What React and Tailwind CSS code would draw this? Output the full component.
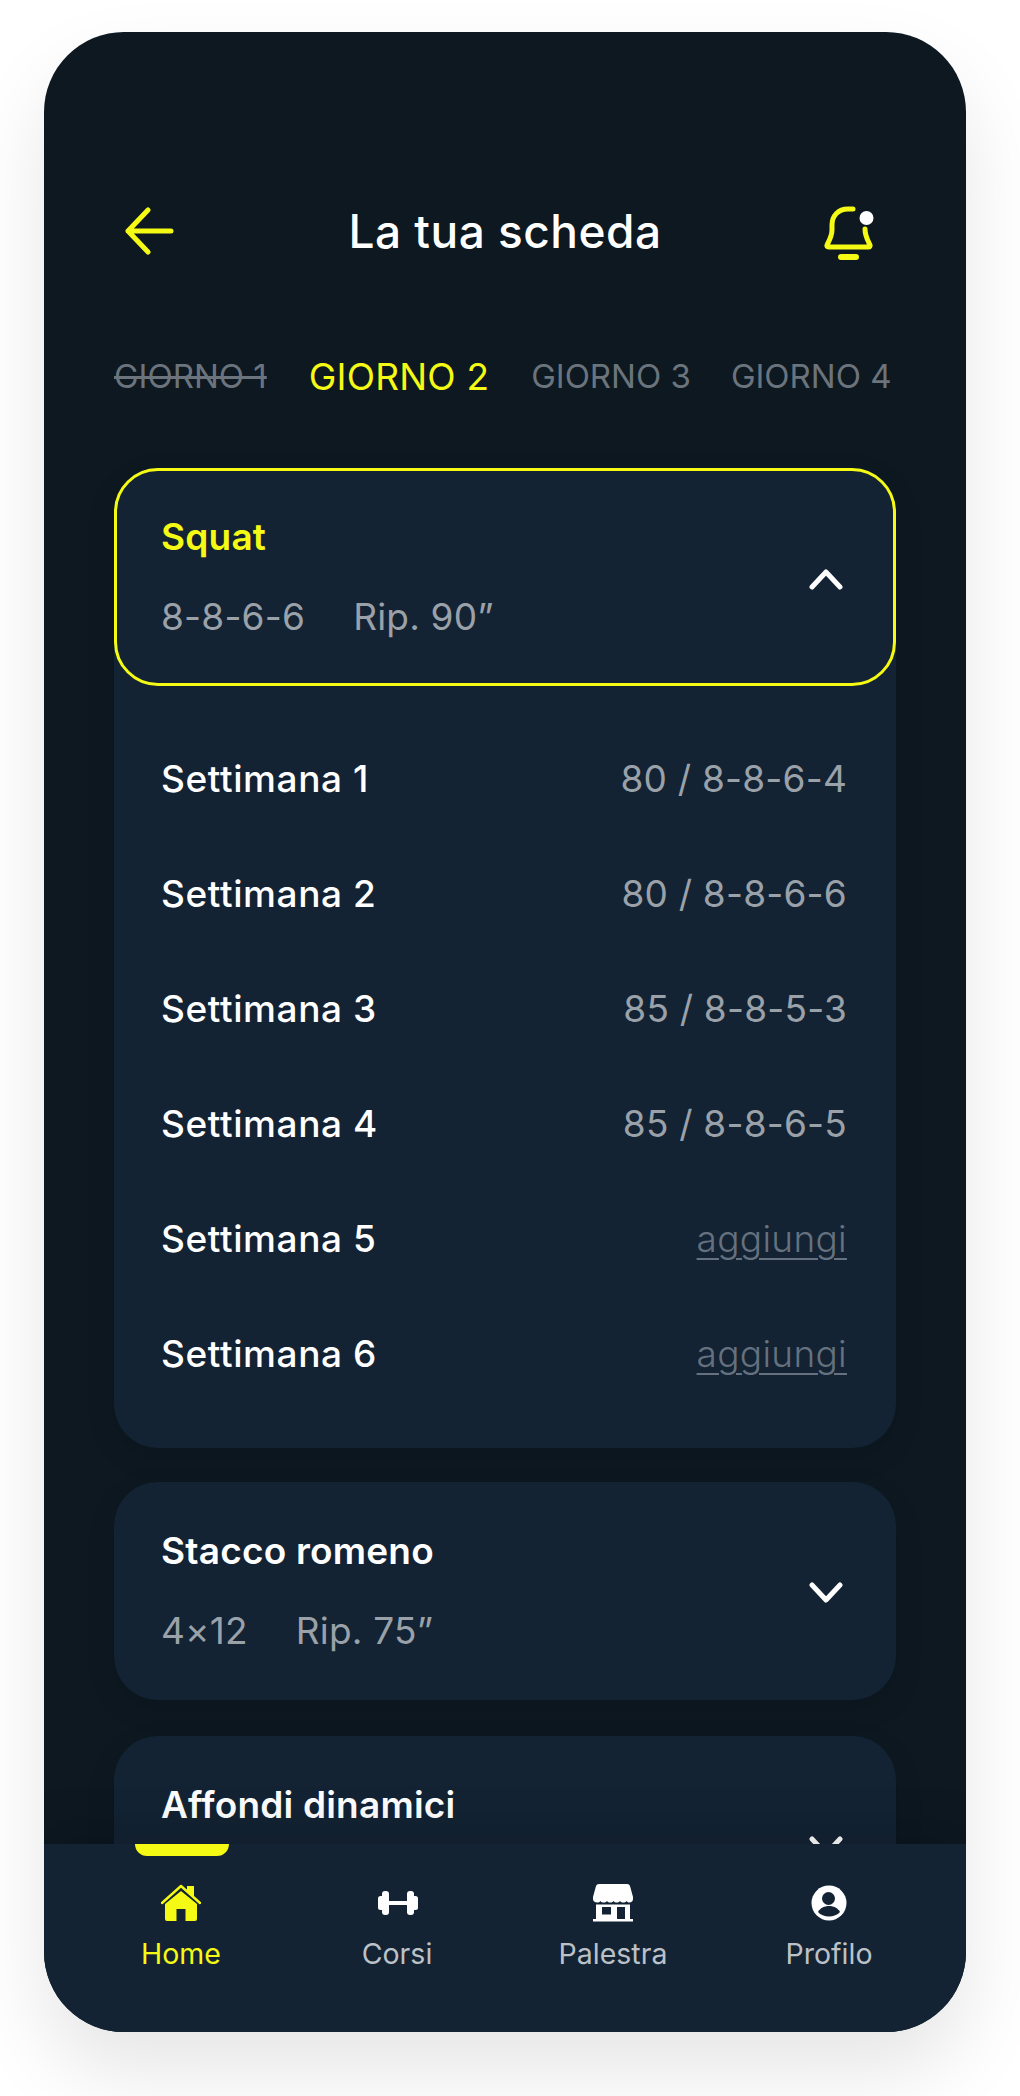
import React from 'react';

const YELLOW = '#f5fa14';

const ArrowLeft = () => (
  <svg width="50" height="48" viewBox="0 0 50 48" fill="none" stroke={YELLOW} strokeWidth="5" strokeLinecap="round" strokeLinejoin="round">
    <path d="M24 3 4 24l20 21M4 24h43" />
  </svg>
);

const Bell = () => (
  <svg width="56" height="60" viewBox="0 0 56 60" fill="none">
    <path d="M31 4h-5C16 4 10 11 10 20v5c0 6-3 11-5 15-.6 1.200.2 2 1.500 2h40c1.300 0 2-.8 1.500-2-2-4-5-9-5-16" stroke={YELLOW} strokeWidth="5" strokeLinecap="round" strokeLinejoin="round" />
    <rect x="16" y="49" width="21" height="6" rx="3" fill={YELLOW} />
    <circle cx="44.500" cy="13" r="7" fill="#fff" />
  </svg>
);

const Chevron = ({ up }) => (
  <svg className="mt-[3px]" width="36" height="22" viewBox="0 0 36 22" fill="none" stroke="#fff" strokeWidth="5" strokeLinecap="round" strokeLinejoin="round">
    <path d={up ? 'M4 19 18 4l14 15' : 'M4 3l14 15L32 3'} />
  </svg>
);

const HomeIcon = () => (
  <svg width="40" height="38" viewBox="0 0 40 38" fill={YELLOW}>
    <path d="M26 2h7v11l-7-6z" />
    <path d="M1 19 20 2l19 17" fill="none" stroke={YELLOW} strokeWidth="2.400" strokeLinecap="round" strokeLinejoin="round" />
    <path d="M20 7 36 20v15a2 2 0 0 1-2 2h-9.500V25h-9v12H6a2 2 0 0 1-2-2V20z" />
  </svg>
);

const DumbbellIcon = () => (
  <svg className="ml-[2px]" width="40" height="24" viewBox="0 0 40 24" fill="#fff">
    <rect x="0" y="5" width="6" height="14" rx="2.500" />
    <rect x="34" y="5" width="6" height="14" rx="2.500" />
    <rect x="4" y="0" width="7" height="24" rx="3" />
    <rect x="29" y="0" width="7" height="24" rx="3" />
    <rect x="10" y="10" width="20" height="4" />
  </svg>
);

const StoreIcon = () => (
  <svg width="40" height="38" viewBox="0 0 40 38" fill="#fff">
    <path d="M6 0h28c1.500 0 2.500.8 3 2l3 11v2c0 2-1.500 3.500-3.400 3.500-1.300 0-2.200-.5-3-1.500-.8 1-2 1.500-3.300 1.500s-2.500-.5-3.300-1.500c-.8 1-2 1.500-3.300 1.500s-2.400-.5-3.200-1.500c-.8 1-2 1.500-3.200 1.500s-2.500-.5-3.300-1.500c-.8 1-2 1.500-3.300 1.500s-2.500-.5-3.300-1.500c-.8 1-1.700 1.500-3 1.500C1.500 18.500 0 17 0 15v-2L3 2c.5-1.200 1.500-2 3-2z" />
    <path fillRule="evenodd" d="M3 20.500h34V35h3v2.500H0V35h3zm6 2.500v7.500h9V23zm15 0v12h8V23z" />
  </svg>
);

const ProfileIcon = () => (
  <svg width="36" height="36" viewBox="0 0 36 36">
    <circle cx="18" cy="18" r="17.500" fill="#fff" />
    <circle cx="17.500" cy="13.500" r="6.500" fill="#132333" />
    <path d="M7 27c2-4 6.500-6 11-6s9 2 11 6c-2.500 2.800-6.500 4.500-11 4.500S9.500 29.800 7 27z" fill="#132333" />
  </svg>
);

const tabs = [
  { label: 'GIORNO 1', className: 'text-[33px] text-[#6b747c] line-through' },
  { label: 'GIORNO 2', className: 'text-[37px] tracking-[0.2px] text-[#f5fa14]' },
  { label: 'GIORNO 3', className: 'text-[33px] text-[#6b747c]' },
  { label: 'GIORNO 4', className: 'ml-[-2px] text-[33px] text-[#6b747c]' },
];

const weeks = [
  { name: 'Settimana 1', value: '80 / 8-8-6-4' },
  { name: 'Settimana 2', value: '80 / 8-8-6-6' },
  { name: 'Settimana 3', value: '85 / 8-8-5-3' },
  { name: 'Settimana 4', value: '85 / 8-8-6-5' },
  { name: 'Settimana 5' },
  { name: 'Settimana 6' },
];

const ExerciseHeader = ({ title, reps, rest, open }) => (
  <div className={`flex h-[218px] items-center justify-between rounded-[44px] border-[3px] pl-[44px] pr-[49px] ${open ? 'border-[#f5fa14]' : 'border-transparent'}`}>
    <div className="h-[124px]">
      <div className={`text-[37px] leading-[44px] tracking-[0.2px] font-semibold ${open ? 'text-[#f5fa14]' : 'text-white'}`}>{title}</div>
      {reps && (
        <div className="mt-[36px] flex gap-[48px] text-[37px] leading-[44px] tracking-[0.2px] text-[#9aa1a9]">
          <span>{reps}</span>
          <span>{rest}</span>
        </div>
      )}
    </div>
    <Chevron up={open} />
  </div>
);

const navItems = [
  { label: 'Home', icon: <HomeIcon />, active: true },
  { label: 'Corsi', icon: <DumbbellIcon /> },
  { label: 'Palestra', icon: <StoreIcon /> },
  { label: 'Profilo', icon: <ProfileIcon /> },
];

export default function App() {
  return (
    <div className="bg-white h-[2096px] pt-[32px] pl-[44px] font-['Inter',sans-serif]">
      <div className="flex h-[2000px] w-[922px] flex-col overflow-hidden rounded-[80px] bg-[#0d1821] shadow-[0_40px_80px_rgba(0,0,0,0.1)]">
        <div className="flex-1 overflow-hidden px-[70px] pt-[175px]">
          <div className="relative flex h-[48px] items-center justify-center">
            <div className="absolute left-[10px] top-0"><ArrowLeft /></div>
            <h1 className="text-[46px] leading-[48px] tracking-[0.5px] font-medium text-white">La tua scheda</h1>
            <div className="absolute right-[18px] top-[-2px]"><Bell /></div>
          </div>

          <div className="mt-[98px] flex h-[48px] items-center gap-[42px]">
            {tabs.map(tab => (
              <span key={tab.label} className={`whitespace-nowrap ${tab.className}`}>{tab.label}</span>
            ))}
          </div>

          <div className="mt-[67px] rounded-[44px] bg-[#132333] shadow-[0_10px_30px_rgba(0,0,0,0.1)]">
            <ExerciseHeader title="Squat" reps="8-8-6-6" rest="Rip. 90”" open />
            <div className="pl-[47px] pr-[49px] pt-[35px] pb-[37px]">
              {weeks.map(week => (
                <div key={week.name} className="flex h-[115px] items-center justify-between text-[37px]">
                  <span className="font-medium tracking-[0.6px] text-white">{week.name}</span>
                  {week.value
                    ? <span className="tracking-[0.2px] text-[#9aa1a9]">{week.value}</span>
                    : <span className="font-light tracking-[0.3px] text-[#66717f] underline underline-offset-[6px] decoration-2">aggiungi</span>}
                </div>
              ))}
            </div>
          </div>

          <div className="mt-[34px] rounded-[44px] bg-[#132333] shadow-[0_10px_30px_rgba(0,0,0,0.1)]">
            <ExerciseHeader title="Stacco romeno" reps="4×12" rest="Rip. 75”" />
          </div>

          <div className="mt-[36px] rounded-[44px] bg-[#132333] shadow-[0_10px_30px_rgba(0,0,0,0.1)]">
            <ExerciseHeader title="Affondi dinamici" />
          </div>
        </div>

        <nav className="relative grid h-[188px] shrink-0 grid-cols-4 bg-[#132333] px-[29px] shadow-[0_-20px_40px_rgba(0,0,0,0.12)]">
          {navItems.map(item => (
            <div key={item.label} className="relative flex flex-col items-center">
              {item.active && <div className="absolute top-0 ml-[2px] h-[12px] w-[94px] rounded-b-[12px] bg-[#f5fa14]" />}
              <div className="mt-[39px] flex h-[40px] items-center">{item.icon}</div>
              <span className={`mt-[14px] text-[28.5px] leading-[34px] ${item.active ? 'text-[#f5fa14]' : 'text-[#bcc1c8]'}`}>{item.label}</span>
            </div>
          ))}
        </nav>
      </div>
    </div>
  );
}
